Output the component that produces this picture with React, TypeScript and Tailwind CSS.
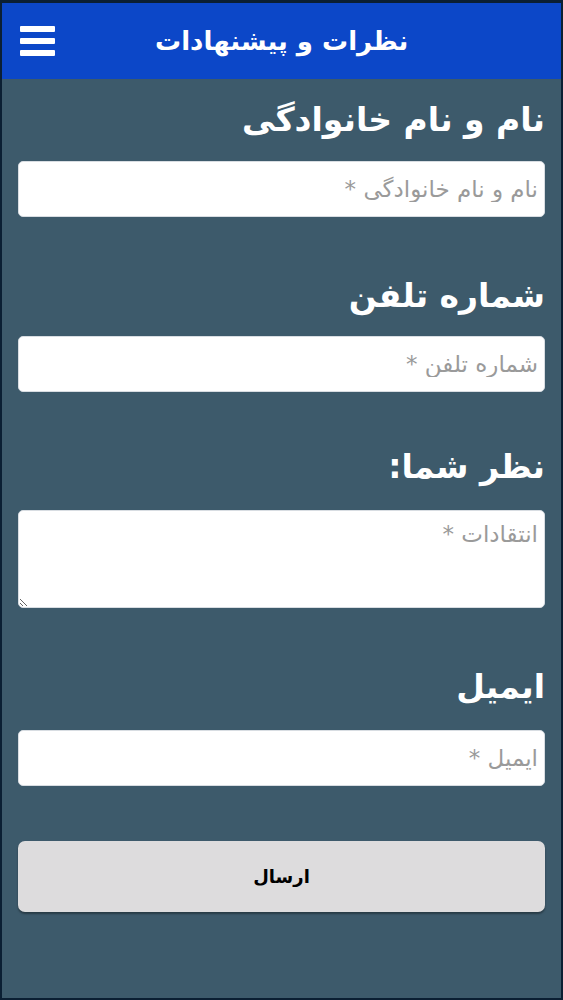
import { useState } from 'react'

const labelClass =
  'block text-right text-[33px] font-bold leading-[44px] text-white'
const fieldClass =
  'block w-full rounded-[5px] border border-[#d8dde2] bg-white px-[6px] text-right text-[23px] text-gray-800 placeholder:text-[#9a9a9a] focus:outline-none'

const MenuIcon = () => (
  <div className="flex w-[35px] flex-col gap-[6px]">
    <span className="block h-[6px] rounded-[1px] bg-white" />
    <span className="block h-[6px] rounded-[1px] bg-white" />
    <span className="block h-[6px] rounded-[1px] bg-white" />
  </div>
)

const App = () => {
  const [name, setName] = useState('')
  const [phone, setPhone] = useState('')
  const [comment, setComment] = useState('')
  const [email, setEmail] = useState('')

  return (
    <div
      className="min-h-[1000px] w-full border-x-2 border-t-[3px] border-b-2 border-[#0b1f33] bg-[#3d5a6b]"
      style={{ fontFamily: '"DejaVu Sans", sans-serif' }}
    >
      <header className="flex h-[76px] items-center bg-[#0c47c8] pl-[18px]">
        <MenuIcon />
        <h1
          dir="rtl"
          className="ml-[100px] text-[26px] font-bold text-white"
        >
          نظرات و پیشنهادات
        </h1>
      </header>

      <form
        dir="rtl"
        className="flex flex-col px-[16px] pt-[19px]"
        onSubmit={(e) => e.preventDefault()}
      >
        <label className={labelClass}>نام و نام خانوادگی</label>
        <input
          className={`${fieldClass} mt-[19px] h-[56px]`}
          placeholder="نام و نام خانوادگی *"
          value={name}
          onChange={(e) => setName(e.target.value)}
        />

        <label className={`${labelClass} mt-[57px]`}>شماره تلفن</label>
        <input
          className={`${fieldClass} mt-[18px] h-[56px]`}
          placeholder="شماره تلفن *"
          value={phone}
          onChange={(e) => setPhone(e.target.value)}
        />

        <label className={`${labelClass} mt-[53px]`}>نظر شما:</label>
        <textarea
          className={`${fieldClass} mt-[21px] h-[98px] pt-[6px]`}
          placeholder="انتقادات *"
          value={comment}
          onChange={(e) => setComment(e.target.value)}
        />

        <label className={`${labelClass} mt-[57px]`}>ایمیل</label>
        <input
          className={`${fieldClass} mt-[21px] h-[56px]`}
          placeholder="ایمیل *"
          value={email}
          onChange={(e) => setEmail(e.target.value)}
        />

        <button
          type="submit"
          className="mt-[55px] h-[71px] w-full rounded-[7px] bg-[#dddcdd] text-[18px] font-bold text-black shadow-[0_2px_2px_rgba(0,0,0,0.35)]"
        >
          ارسال
        </button>
      </form>
    </div>
  )
}

export default App
